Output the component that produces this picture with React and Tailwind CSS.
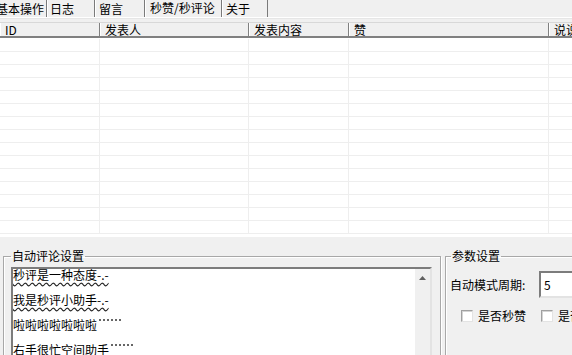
import React from "react";

const columns = [
  { key: "id", label: "ID", w: "w-[100px]" },
  { key: "user", label: "发表人", w: "w-[149px]" },
  { key: "content", label: "发表内容", w: "w-[100px]" },
  { key: "like", label: "赞", w: "w-[200px]" },
  { key: "shuo", label: "说说", w: "w-[120px]" },
];

const tabs = [
  { label: "基本操作", w: "w-[51px]", pl: "pl-0" },
  { label: "日志", w: "w-[48px]", pl: "pl-[3px]" },
  { label: "留言", w: "w-[50px]", pl: "pl-[4px]" },
  { label: "秒赞/秒评论", w: "w-[77px]", pl: "pl-[5px]", active: true },
  { label: "关于", w: "w-[46px]", pl: "pl-[4px]" },
];

const comments = [
  { text: "秒评是一种态度-.-", wavy: true },
  { text: "我是秒评小助手-.-", wavy: true },
  { text: "啦啦啦啦啦啦啦", wavy: false },
  { text: "右手很忙空间助手", wavy: false },
];

const Checkbox = ({ label, className }) => (
  <div className={"flex items-center " + className}>
    <span className="w-[12px] h-[12px] bg-white border border-t-[#a0a0a0] border-l-[#a0a0a0] border-r-[#e3e3e3] border-b-[#e3e3e3] shadow-[inset_1px_1px_0_#d4d4d4]" />
    <span className="ml-[5px]">{label}</span>
  </div>
);

const App = () => {
  const rows = Array.from({ length: 15 }, (_, i) => i);

  return (
    <div className="w-[572px] h-[355px] overflow-hidden bg-[#f0f0f0] text-[12px] leading-[14px] text-black font-['Noto_Sans_CJK_SC','Noto_Sans',sans-serif]">
      {/* tab strip */}
      <div className="flex h-[17px] -ml-[4px]">
        {tabs.map((t) => (
          <div
            key={t.label}
            className={
              "flex h-full shrink-0 border-r border-r-[#7a7a7a] shadow-[inset_1px_0_0_#ffffff] " +
              t.w +
              " " +
              t.pl +
              (t.active ? " items-start pt-[1px]" : " items-end pb-[1px]")
            }
          >
            {t.label}
          </div>
        ))}
      </div>
      <div className="h-[2px] border-t border-[#ffffff] border-b border-b-[#e6e6e6]" />
      <div className="h-[3px]" />

      {/* list view */}
      <div className="bg-white h-[215px] overflow-hidden">
        <div className="flex h-[16px] bg-[#f0f0f0] border-t border-[#d8d8d8] border-b-2 border-b-[#808080]">
          {columns.map((c) => (
            <div
              key={c.key}
              className={
                "shrink-0 flex items-center pl-[5px] border-r border-r-[#808080] shadow-[inset_1px_0_0_#ffffff] " +
                c.w
              }
            >
              {c.label}
            </div>
          ))}
        </div>
        <div className="pt-[1px]">
          {rows.map((r) => (
            <div key={r} className="flex h-[13px] border-b border-[#eeeeee]">
              {columns.map((c) => (
                <div key={c.key} className={"shrink-0 h-full border-r border-[#eeeeee] " + c.w} />
              ))}
            </div>
          ))}
        </div>
      </div>

      {/* bottom settings */}
      <div className="flex mt-[12px]">
        <fieldset className="ml-[3px] w-[438px] h-[140px] shrink-0 border border-[#a8a8a8] shadow-[inset_1px_1px_0_#ffffff,1px_1px_0_#ffffff]">
          <legend className="ml-[7px] px-[1px] leading-[14px]">自动评论设置</legend>
          <div className="ml-[7px] mt-[4px] w-[421px] h-[110px] flex bg-white border-2 border-t-[#7c7c7c] border-l-[#7c7c7c] border-r-[#e3e3e3] border-b-[#e3e3e3]">
            <div className="flex-1 -mt-[1px]">
              {comments.map((c) => (
                <div key={c.text} className="h-[25px] whitespace-nowrap text-black">
                  {c.wavy ? (
                    <span className="inline-block w-[114px] underline decoration-wavy decoration-[#222] underline-offset-[2px]">
                      {c.text}
                    </span>
                  ) : (
                    <span>
                      {c.text}
                      <span className="inline-block align-top ml-[2px] mt-[1px] w-[22px] h-[4px] border-t-2 border-dotted border-[#666]" />
                    </span>
                  )}
                </div>
              ))}
            </div>
            <div className="w-[15px] bg-[#f0f0f0] flex justify-center pt-[7px]">
              <svg width="7" height="4" viewBox="0 0 7 4">
                <polygon points="3.5,0 7,4 0,4" fill="#606060" />
              </svg>
            </div>
          </div>
        </fieldset>

        <fieldset className="ml-[4px] w-[200px] h-[140px] shrink-0 border border-[#a8a8a8] shadow-[inset_1px_1px_0_#ffffff,1px_1px_0_#ffffff]">
          <legend className="ml-[5px] px-[1px] leading-[14px]">参数设置</legend>
          <div className="flex items-center mt-[8px] pl-[4px]">
            <span className="w-[89px] shrink-0">自动模式周期:</span>
            <div className="h-[27px] w-[80px] shrink-0 bg-white flex items-center pl-[3px] border-2 border-t-[#7c7c7c] border-l-[#7c7c7c] border-r-[#e3e3e3] border-b-[#e3e3e3]">
              5
            </div>
          </div>
          <div className="flex mt-[11px] pl-[15px]">
            <Checkbox label="是否秒赞" />
            <Checkbox label="是否秒评" className="ml-[15px]" />
          </div>
        </fieldset>
      </div>
    </div>
  );
};

export default App;
